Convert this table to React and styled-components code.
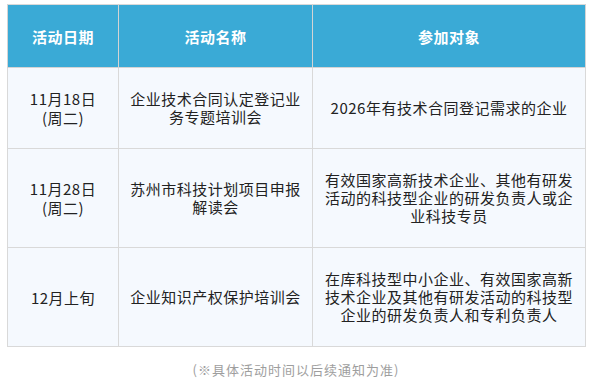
import React from "react";
import styled, { createGlobalStyle } from "styled-components";

const rows = [
  {
    date: ["11月18日", "(周二)"],
    name: "企业技术合同认定登记业务专题培训会",
    target: "2026年有技术合同登记需求的企业",
    height: 81,
  },
  {
    date: ["11月28日", "(周二)"],
    name: "苏州市科技计划项目申报解读会",
    target: "有效国家高新技术企业、其他有研发活动的科技型企业的研发负责人或企业科技专员",
    height: 99,
  },
  {
    date: ["12月上旬"],
    name: "企业知识产权保护培训会",
    target: "在库科技型中小企业、有效国家高新技术企业及其他有研发活动的科技型企业的研发负责人和专利负责人",
    height: 99,
  },
];

const App = () => {
  return (
    <Page>
      <GlobalStyle />
      <Table>
        <colgroup>
          <col style={{ width: 111 }} />
          <col style={{ width: 194 }} />
          <col style={{ width: 273 }} />
        </colgroup>
        <thead>
          <tr>
            <Th>活动日期</Th>
            <Th>活动名称</Th>
            <Th>参加对象</Th>
          </tr>
        </thead>
        <tbody>
          {rows.map((r, i) => (
            <Row key={i} $h={r.height}>
              <Td>
                {r.date.map((d, j) => (
                  <DateLine key={j}>{d}</DateLine>
                ))}
              </Td>
              <Td>{r.name}</Td>
              <Td>{r.target}</Td>
            </Row>
          ))}
        </tbody>
      </Table>
      <Note>(※具体活动时间以后续通知为准)</Note>
    </Page>
  );
};

const GlobalStyle = createGlobalStyle`
  body {
    margin: 0;
    background: #ffffff;
    font-family: "Noto Sans CJK SC", "Noto Sans", sans-serif;
  }
`;

const Page = styled.div`
  width: 592px;
  padding: 4px 7px 0;
  box-sizing: border-box;
`;

const Table = styled.table`
  width: 578px;
  table-layout: fixed;
  border-collapse: collapse;
  border: 1px solid #d9d9d9;
`;

const Th = styled.th`
  height: 63px;
  padding: 0 10px;
  box-sizing: border-box;
  background: #3aaad6;
  color: #ffffff;
  font-size: 15px;
  font-weight: 700;
  letter-spacing: 0.5px;
  text-align: center;
  border: 1px solid #d4d4d4;
  border-top: none;
`;

const Row = styled.tr`
  height: ${(p) => p.$h}px;
  background: #f5f9fe;
`;

const Td = styled.td`
  padding: 0 10px;
  border: 1px solid #d9d9d9;
  color: #222222;
  font-size: 15px;
  line-height: 18px;
  letter-spacing: 0.5px;
  text-align: center;
  vertical-align: middle;
`;

const DateLine = styled.div`
  line-height: 19px;
`;

const Note = styled.div`
  margin-top: 14px;
  text-align: center;
  color: #9e9e9e;
  font-size: 13px;
  line-height: 18px;
  letter-spacing: 1px;
`;

export default App;
